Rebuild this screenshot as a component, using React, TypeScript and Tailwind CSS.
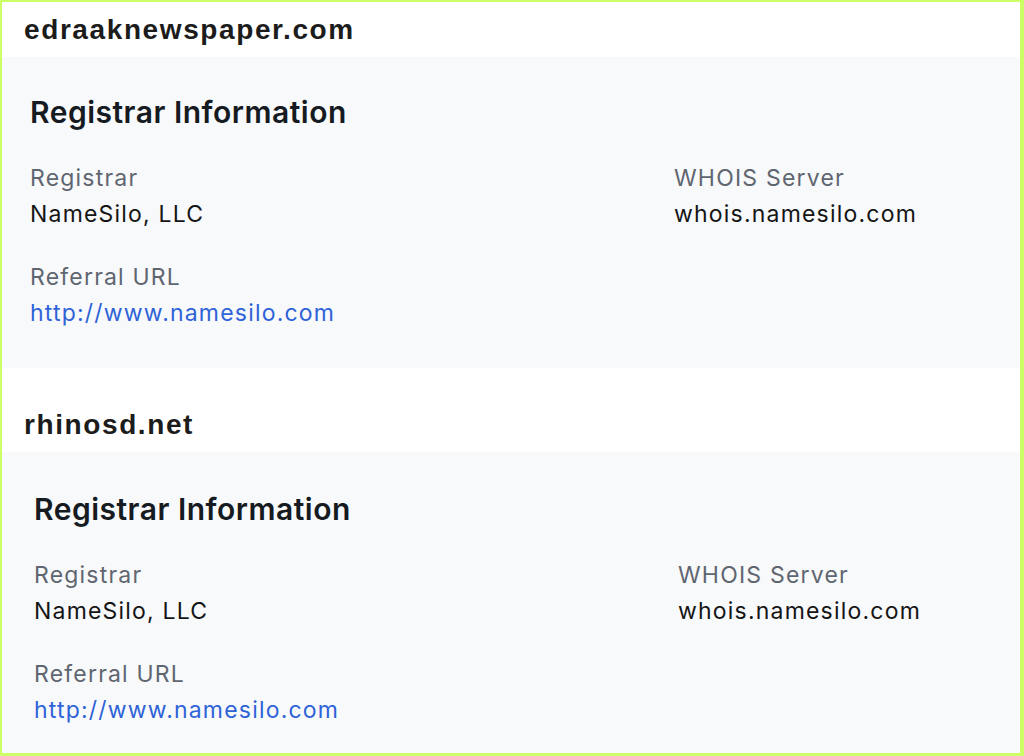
const domains = [
  {
    name: "edraaknewspaper.com",
    registrar: "NameSilo, LLC",
    whois: "whois.namesilo.com",
    referral: "http://www.namesilo.com",
  },
  {
    name: "rhinosd.net",
    registrar: "NameSilo, LLC",
    whois: "whois.namesilo.com",
    referral: "http://www.namesilo.com",
  },
];

type Domain = (typeof domains)[number];

function Field({ label, value, link }: { label: string; value: string; link?: boolean }) {
  return (
    <div className="flex flex-col gap-[8px] tracking-[1.2px]">
      <div className="text-[23px] leading-[28px] text-[#5f6670]">{label}</div>
      {link ? (
        <a href={value} className="text-[23px] leading-[28px] text-[#2f63d8]">
          {value}
        </a>
      ) : (
        <div className="text-[23px] leading-[28px] text-[#151515]">{value}</div>
      )}
    </div>
  );
}

function DomainCard({ domain, shifted }: { domain: Domain; shifted?: boolean }) {
  return (
    <section className={shifted ? "mt-[29px]" : ""}>
      <div className="h-[55px] flex items-center pl-[22px]">
        <h1 className="font-['Liberation_Sans',Arial,sans-serif] font-bold text-[28px] tracking-[1.6px] text-[#1c1c1c]">
          {domain.name}
        </h1>
      </div>
      <div
        className={`bg-[#f8f9fb] h-[311px] font-['Inter',sans-serif] ${
          shifted ? "pl-[32px] pt-[39px]" : "pl-[28px] pt-[37px]"
        }`}
      >
        <h2 className="text-[30px] leading-[36px] font-semibold tracking-[0.5px] text-[#161b22]">
          Registrar Information
        </h2>
        <div className="mt-[34px] grid grid-cols-[644px_1fr] gap-y-[35px]">
          <Field label="Registrar" value={domain.registrar} />
          <Field label="WHOIS Server" value={domain.whois} />
          <Field label="Referral URL" value={domain.referral} link />
        </div>
      </div>
    </section>
  );
}

export default function App() {
  return (
    <div className="h-[756px] w-[1024px] overflow-hidden bg-white border-t-2 border-l-2 border-b-[3px] border-r-4 border-[#ccff66]">
      {domains.map((d, i) => (
        <DomainCard key={d.name} domain={d} shifted={i > 0} />
      ))}
    </div>
  );
}
